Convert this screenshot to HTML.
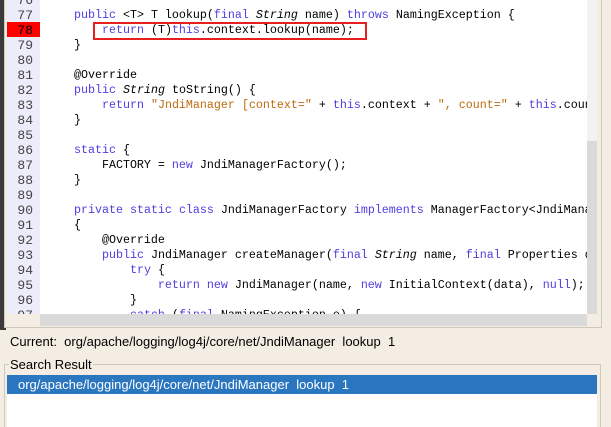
<html><head><style>
html,body{margin:0;width:611px;height:427px;overflow:hidden}
body{background:#f3ede3;position:relative;font-family:"Liberation Sans",sans-serif}
.ed{position:absolute;left:7px;top:0;width:580px;height:314px;background:#fff;overflow:hidden}
.gut{position:absolute;left:0;top:0;width:33px;height:314px;background:#ececfb}
.ln{position:absolute;left:0;width:26px;text-align:right;font:13px/15px "Liberation Mono",monospace;color:#444}
.cd{position:absolute;left:39px;white-space:pre;font:11.67px/15px "Liberation Mono",monospace;color:#000}
.k{color:#4d3fe0}.s{color:#c06a10}.i{font-style:italic}
</style></head><body>
<div style="position:absolute;left:0;top:0;width:6px;height:330px;background:#3a3a3a"></div>
<div style="position:absolute;left:4px;top:0;width:596px;height:327px;border-right:1px solid #cfc8bd;border-left:1px solid #cfc8bd;border-bottom:1px solid #cfc8bd;background:#f3ede3"></div>
<div class="ed">
<div class="gut"></div>
<div style="position:absolute;left:0;top:22px;width:33px;height:15px;background:#f00"></div>
<div id="g"></div>
<div style="position:absolute;left:86px;top:22px;width:270px;height:14px;border:2px solid #e62020"></div>
</div>
<div style="position:absolute;left:587px;top:0;width:10px;height:314px;background:#f2f2f2"></div>
<div style="position:absolute;left:587px;top:141px;width:10px;height:173px;background:#dadada"></div>
<div style="position:absolute;left:40px;top:314px;width:547px;height:12px;background:#dadada"></div>
<div style="position:absolute;left:7px;top:314px;width:33px;height:12px;background:#f3ede3"></div>
<div style="position:absolute;left:10px;top:334px;font-size:13px">Current:&nbsp; org/apache/logging/log4j/core/net/JndiManager&nbsp; lookup&nbsp; 1</div>
<div style="position:absolute;left:4px;top:364px;width:595px;height:70px;border:1px solid #cfc8bd"></div>
<div style="position:absolute;left:9px;top:357px;font-size:13px;background:#f3ede3;padding:0 1px">Search Result</div>
<div style="position:absolute;left:7px;top:375px;width:590px;height:52px;background:#fff"></div>
<div style="position:absolute;left:7px;top:375px;width:590px;height:19px;background:#2a76bf;color:#fff;font-size:13px;line-height:19px;padding-left:11px;box-sizing:border-box">org/apache/logging/log4j/core/net/JndiManager&nbsp; lookup&nbsp; 1</div>
<script>
var L=[
"",
"    <span class=k>public</span> &lt;T&gt; T lookup(<span class=k>final</span> <span class=i>String</span> name) <span class=k>throws</span> NamingException {",
"        <span class=k>return</span> (T)<span class=k>this</span>.context.lookup(name);",
"    }",
"",
"    @Override",
"    <span class=k>public</span> <span class=i>String</span> toString() {",
"        <span class=k>return</span> <span class=s>\"JndiManager [context=\"</span> + <span class=k>this</span>.context + <span class=s>\", count=\"</span> + <span class=k>this</span>.count",
"    }",
"",
"    <span class=k>static</span> {",
"        FACTORY = <span class=k>new</span> JndiManagerFactory();",
"    }",
"",
"    <span class=k>private</span> <span class=k>static</span> <span class=k>class</span> JndiManagerFactory <span class=k>implements</span> ManagerFactory&lt;JndiManager",
"    {",
"        @Override",
"        <span class=k>public</span> JndiManager createManager(<span class=k>final</span> <span class=i>String</span> name, <span class=k>final</span> Properties data",
"            <span class=k>try</span> {",
"                <span class=k>return</span> <span class=k>new</span> JndiManager(name, <span class=k>new</span> InitialContext(data), <span class=k>null</span>);",
"            }",
"            <span class=k>catch</span> (<span class=k>final</span> NamingException e) {"];
var h="";
for(var n=0;n<L.length;n++){var y=n*15-7;var num=76+n;
h+='<div class="ln" style="top:'+y+'px;'+(num==78?'color:#000':'')+'">'+num+'</div>';
h+='<div class="cd" style="top:'+y+'px">'+L[n]+'</div>';}
document.getElementById("g").innerHTML=h;
</script>
</body></html>
